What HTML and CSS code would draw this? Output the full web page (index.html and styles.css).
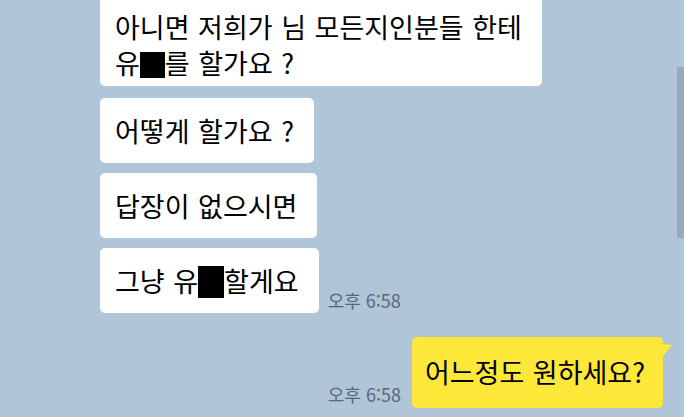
FILE: index.html
```html
<!DOCTYPE html>
<html lang="ko">
<head>
  <meta charset="UTF-8" />
  <meta name="viewport" content="width=device-width, initial-scale=1.0"/>
  <title>채팅</title>
  <link rel="stylesheet" href="styles.css">
</head>
<body>

  <div class="chat">
    <div class="messages">
      <div class="row received">
        <div class="bubble first">아니면 저희가 님 모든지인분들 한테<br>유<span class="censor"></span>를 할가요 ?</div>
      </div>
      <div class="row received">
        <div class="bubble">어떻게 할가요 ?</div>
      </div>
      <div class="row received">
        <div class="bubble">답장이 없으시면</div>
      </div>
      <div class="row received">
        <div class="bubble">그냥 유<span class="censor tall"></span>할게요</div>
        <span class="time">오후 6:58</span>
      </div>

      <div class="row sent">
        <span class="time">오후 6:58</span>
        <div class="bubble mine">어느정도 원하세요?</div>
      </div>
    </div>

    <div class="scrollbar"></div>
  </div>

</body>
</html>
```

FILE: styles.css
```css
body {
  margin: 0;
  padding: 0;
  background-color: #b1c5d8;
  font-family: 'Noto Sans CJK KR', 'Noto Sans', sans-serif;
  color: #000;
  overflow: hidden;
}

.chat {
  position: relative;
  height: 417px;
  overflow: hidden;
}

.messages {
  display: flex;
  flex-direction: column;
  gap: 10px;
  margin-top: -6px;
}

.row {
  display: flex;
  align-items: flex-end;
}

.received {
  padding-left: 100px;
}

.sent {
  justify-content: flex-end;
  padding-right: 21px;
  margin-top: 14px;
}

.bubble {
  background: #fff;
  border-radius: 5px;
  padding: 15px 20px 14px 15px;
  font-size: 27px;
  line-height: 36px;
  word-spacing: 1px;
  white-space: nowrap;
}

.bubble.first {
  padding-bottom: 5px;
  margin-bottom: 2px;
}

.censor {
  display: inline-block;
  width: 25px;
  height: 26px;
  background: #000;
  vertical-align: -4px;
}

.censor.tall {
  width: 26px;
  height: 32px;
  vertical-align: -6px;
}

.time {
  font-size: 18px;
  color: #586878;
  line-height: 22px;
  margin: 0 0 2px 9px;
}

.sent .time {
  margin: 0 11px 3px 0;
}

.bubble.mine {
  position: relative;
  background: #fde83a;
  padding: 17px 18px 18px 13px;
}

.bubble.mine::after {
  content: "";
  position: absolute;
  top: 4px;
  right: -9px;
  border-left: 10px solid #fde83a;
  border-top: 7px solid transparent;
  border-bottom: 7px solid transparent;
  transform: skewY(-30deg);
}

.scrollbar {
  position: absolute;
  right: 0;
  top: 67px;
  width: 7px;
  height: 171px;
  background: #97a9bb;
}
```
